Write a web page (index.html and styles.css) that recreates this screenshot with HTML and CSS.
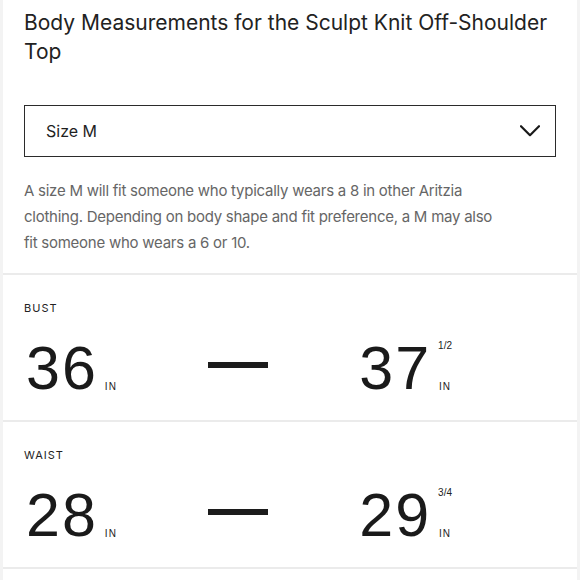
FILE: index.html
```html
<!DOCTYPE html>
<html lang="en">
<head>
<meta charset="utf-8">
<title>Body Measurements</title>
<link rel="stylesheet" href="styles.css">
</head>
<body>
<div class="page">
  <header class="intro">
    <h1 class="title">Body Measurements for the Sculpt Knit Off-Shoulder Top</h1>
    <div class="select">
      <span class="select-label">Size M</span>
      <svg class="chevron" width="20" height="12" viewBox="0 0 20 12" aria-hidden="true">
        <path d="M1 1.2 L10 10.2 L19 1.2" fill="none" stroke="#1a1a1a" stroke-width="2.2" stroke-linecap="round" stroke-linejoin="round"/>
      </svg>
    </div>
    <p class="desc">A size M will fit someone who typically wears a 8 in other Aritzia clothing. Depending on body shape and fit preference, a M may also fit someone who wears a 6 or 10.</p>
  </header>

  <section class="measure">
    <div class="measure-label">BUST</div>
    <div class="range">
      <div class="value">
        <span class="num">36</span>
        <span class="side"><span class="frac"></span><span class="unit">IN</span></span>
      </div>
      <span class="dash"></span>
      <div class="value">
        <span class="num">37</span>
        <span class="side"><span class="frac">1/2</span><span class="unit">IN</span></span>
      </div>
    </div>
  </section>

  <section class="measure">
    <div class="measure-label">WAIST</div>
    <div class="range">
      <div class="value">
        <span class="num">28</span>
        <span class="side"><span class="frac"></span><span class="unit">IN</span></span>
      </div>
      <span class="dash"></span>
      <div class="value">
        <span class="num">29</span>
        <span class="side"><span class="frac">3/4</span><span class="unit">IN</span></span>
      </div>
    </div>
  </section>
  <div class="end-rule"></div>
</div>
</body>
</html>
```

FILE: styles.css
```css
html, body {
  margin: 0;
  padding: 0;
  background: #f3f3f3;
}

body {
  font-family: "Inter", "Liberation Sans", sans-serif;
  color: #1f1f1f;
}

.page {
  margin: 0 3px 0 3px;
  background: #ffffff;
  min-height: 580px;
}

.intro {
  padding: 8px 21px 17px 21px;
}

.title {
  margin: 0;
  font-size: 21px;
  font-weight: 400;
  line-height: 29px;
  color: #222;
  letter-spacing: 0;
}

.select {
  margin-top: 39px;
  height: 50px;
  border: 1px solid #2b2b2b;
  display: flex;
  align-items: center;
  justify-content: space-between;
  padding: 0 15px 0 21px;
}

.select-label {
  font-size: 16px;
  color: #1f1f1f;
}

.chevron {
  display: block;
}

.desc {
  margin: 21px 0 0 0;
  max-width: 480px;
  font-size: 15px;
  line-height: 26px;
  letter-spacing: -0.25px;
  color: #666;
}

.measure {
  border-top: 2px solid #ebebeb;
  padding: 27px 21px 22px 21px;
}

.measure-label {
  font-size: 11px;
  line-height: 13px;
  letter-spacing: 1px;
  color: #222;
}

.range {
  margin-top: 23px;
  margin-left: 2px;
  width: 426px;
  display: flex;
  align-items: center;
  justify-content: space-between;
}

.value {
  display: flex;
  align-items: stretch;
}

.num {
  font-family: "Liberation Sans", sans-serif;
  font-size: 61px;
  line-height: 60px;
  color: #1a1a1a;
  letter-spacing: 2px;
}

.side {
  display: flex;
  flex-direction: column;
  justify-content: space-between;
  align-items: center;
  margin-left: 7px;
  padding: 3px 0 7px 0;
  font-family: "Liberation Sans", sans-serif;
}

.frac {
  font-size: 10px;
  line-height: 10px;
  color: #222;
}

.unit {
  font-size: 10px;
  line-height: 9px;
  letter-spacing: 1px;
  color: #222;
}

.dash {
  width: 60px;
  height: 6px;
  background: #1c1c1c;
  margin-top: -7px;
}

.end-rule {
  border-top: 2px solid #ebebeb;
}
```
